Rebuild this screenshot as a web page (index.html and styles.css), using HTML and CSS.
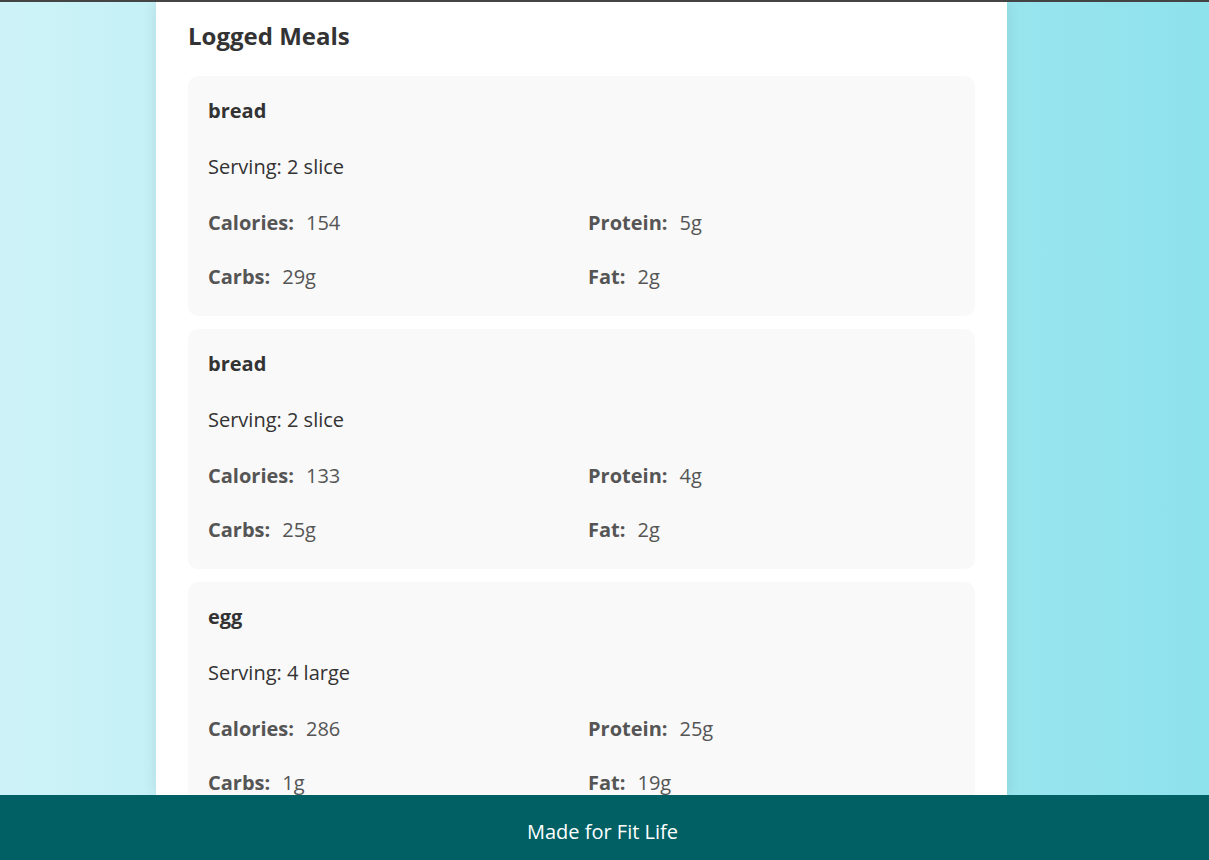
FILE: index.html
```html
<!DOCTYPE html>
<html lang="en">
<head>
<meta charset="utf-8">
<title>Fit Life</title>
<link rel="stylesheet" href="styles.css">
</head>
<body>
<div class="page">
<main class="panel">
  <h2 class="panel-title">Logged Meals</h2>
  <ul class="meals">
    <li class="meal">
      <h3 class="meal-name">bread</h3>
      <p class="serving">Serving: 2 slice</p>
      <dl class="nutrients">
        <div class="nutrient"><dt>Calories:</dt><dd>154</dd></div>
        <div class="nutrient"><dt>Protein:</dt><dd>5g</dd></div>
        <div class="nutrient"><dt>Carbs:</dt><dd>29g</dd></div>
        <div class="nutrient"><dt>Fat:</dt><dd>2g</dd></div>
      </dl>
    </li>
    <li class="meal">
      <h3 class="meal-name">bread</h3>
      <p class="serving">Serving: 2 slice</p>
      <dl class="nutrients">
        <div class="nutrient"><dt>Calories:</dt><dd>133</dd></div>
        <div class="nutrient"><dt>Protein:</dt><dd>4g</dd></div>
        <div class="nutrient"><dt>Carbs:</dt><dd>25g</dd></div>
        <div class="nutrient"><dt>Fat:</dt><dd>2g</dd></div>
      </dl>
    </li>
    <li class="meal">
      <h3 class="meal-name">egg</h3>
      <p class="serving">Serving: 4 large</p>
      <dl class="nutrients">
        <div class="nutrient"><dt>Calories:</dt><dd>286</dd></div>
        <div class="nutrient"><dt>Protein:</dt><dd>25g</dd></div>
        <div class="nutrient"><dt>Carbs:</dt><dd>1g</dd></div>
        <div class="nutrient"><dt>Fat:</dt><dd>19g</dd></div>
      </dl>
    </li>
  </ul>
</main>
</div>
<footer class="footer">Made for Fit Life</footer>
</body>
</html>
```
FILE: styles.css
```css
* {
  box-sizing: border-box;
  margin: 0;
  padding: 0;
}

body {
  display: flex;
  flex-direction: column;
  height: 100vh;
  overflow: hidden;
  border-top: 2px solid #444;
  background: linear-gradient(to right, #cdf3f8, #8ee2ec);
  color: #333;
  font-family: "Segoe UI", "Open Sans", "Noto Sans", sans-serif;
  font-size: 20px;
  line-height: 28px;
}

.page {
  display: flex;
  flex: 1;
  justify-content: center;
  min-height: 0;
  padding-right: 46px;
}

.panel {
  width: 100%;
  max-width: 851px;
  padding: 18px 32px 0;
  background: #fff;
  box-shadow: 0 0 13px rgba(0, 0, 0, 0.1);
}

.panel-title {
  margin-bottom: 24px;
  font-size: 24px;
  line-height: 32px;
}

.meals {
  display: grid;
  gap: 13px;
  list-style: none;
}

.meal {
  padding: 21px 20px 25px;
  border-radius: 10px;
  background: #f9f9f9;
}

.meal-name {
  margin-bottom: 28px;
  font-size: 20px;
}

.serving {
  margin-bottom: 28px;
}

.nutrients {
  display: grid;
  grid-template-columns: 1fr 1fr;
  gap: 26px 13px;
  color: #555;
}

.nutrient {
  display: flex;
  gap: 12px;
}

.nutrient dt {
  font-weight: 700;
}

.footer {
  position: relative;
  padding: 23px 4px 14px 0;
  background: #006064;
  color: #fff;
  text-align: center;
}
```
